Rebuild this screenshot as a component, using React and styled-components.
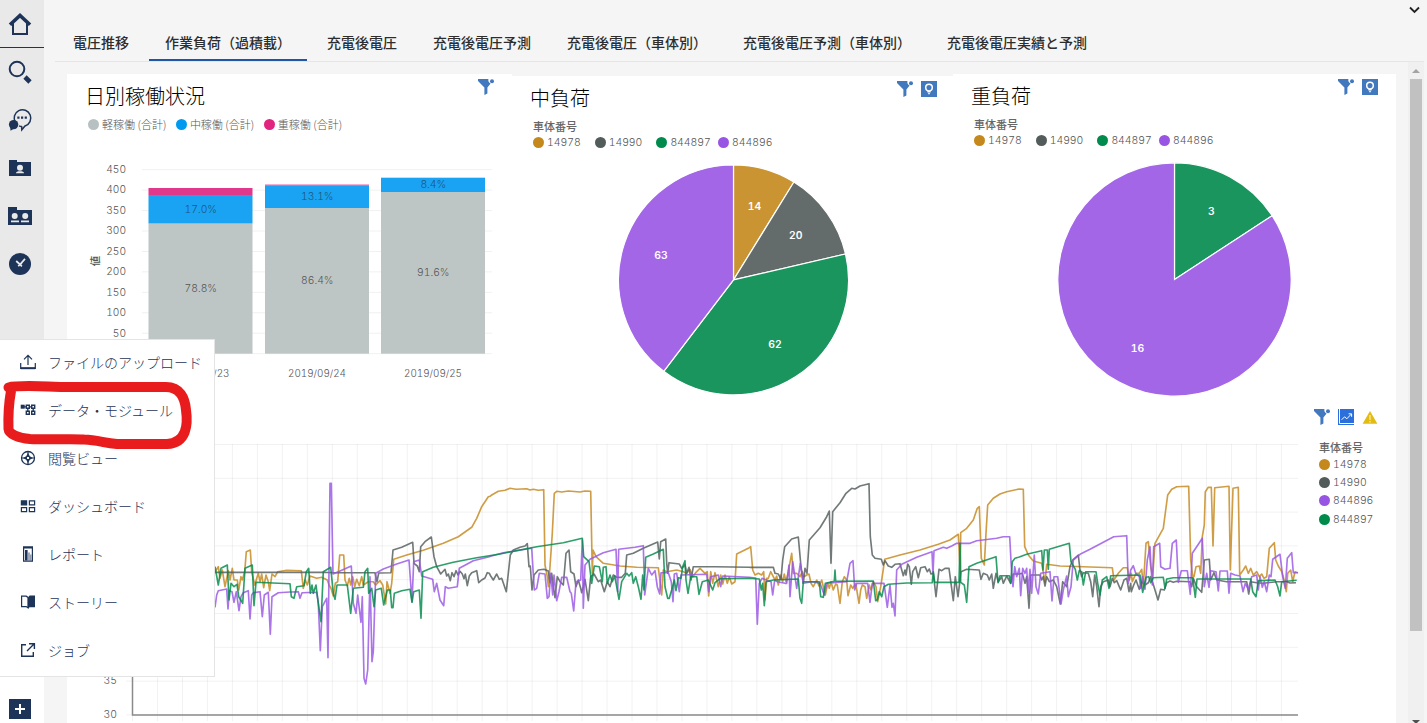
import React from 'react';
import styled, {createGlobalStyle, css} from 'styled-components';

const NAVY = '#1d3458';
const BLUE = '#4178be';
const FONT = '"Inter", "Noto Sans CJK JP", sans-serif';

const SERIES_COLORS = {
   14978: '#c4881c',
   14990: '#525c5b',
   844897: '#008a4b',
   844896: '#9855e4',
};

const GlobalStyle = createGlobalStyle`
   * { box-sizing: border-box; }
   body {
      margin: 0;
      overflow: hidden;
      font-family: "Noto Sans CJK JP", sans-serif;
   }
   svg { display: block; overflow: visible; }
`;

const Page = styled.div`
   position: relative;
   display: flex;
   width: 1427px;
   height: 723px;
   overflow: hidden;
   background: #f5f5f5;
`;

const Sidebar = styled.nav`
   display: flex;
   flex-direction: column;
   width: 44px;
   background: #e9e9e9;
`;

const SidebarItem = styled.div`
   display: flex;
   align-items: center;
   height: 48px;
   padding-left: 8px;
   ${props => props.$active && css`
      border-bottom: 1px solid ${NAVY};
   `}
`;

const SidebarFooter = styled.div`
   height: 46px;
   margin-top: auto;
   padding: 22px 0 0 9px;
   background: #ffffff;
`;

const Main = styled.main`
   display: flex;
   flex-direction: column;
   flex: 1;
   min-width: 0;
`;

const TopBar = styled.div`
   display: flex;
   flex-shrink: 0;
   justify-content: flex-end;
   height: 24px;
   padding: 6px 7px 0 0;
`;

const TabBar = styled.div`
   display: flex;
   flex-shrink: 0;
   gap: 4px;
   height: 38px;
   margin: 0 3px 0 11px;
   padding-left: 2px;
   border-bottom: 1px solid #e6e6e6;
`;

const Tab = styled.div`
   height: 37px;
   padding: 0 16px;
   font-size: 14px;
   font-weight: 500;
   line-height: 37px;
   white-space: nowrap;
   color: #2d2d2d;
   border-bottom: ${props => props.$active ? '2px solid #1f57a4' : 'none'};
`;

const Viewport = styled.div`
   display: flex;
   flex: 1;
   min-height: 0;
   padding: 0 3px 0 23px;
`;

const Board = styled.div`
   width: 1329px;
   margin-right: 12px;
   padding-top: 12px;
`;

const CardRow = styled.div`
   display: grid;
   grid-template-columns: 445px 441px 443px;
   height: 328px;
`;

const Card = styled.section`
   margin-top: ${props => props.$drop || 0}px;
   padding-top: 5px;
   background: #ffffff;
`;

const CardHeader = styled.div`
   display: flex;
   justify-content: space-between;
   align-items: flex-start;
   height: 29px;
   padding: 0 ${props => props.$right || 18}px 0 18px;
`;

const CardTitle = styled.h2`
   margin: 5px 0 0;
   font-size: 20px;
   font-weight: 300;
   line-height: 24px;
   color: #000000;
`;

const Tools = styled.div`
   display: flex;
   gap: 8px;
   height: 16px;
`;

const LegendTitle = styled.div`
   height: 16px;
   font-size: 11px;
   font-weight: 500;
   line-height: 16px;
   color: #666666;
`;

const Legend = styled.div`
   display: flex;
   flex-direction: ${props => props.$vertical ? 'column' : 'row'};
   gap: ${props => props.$gap || 0}px;
`;

const LegendItem = styled.div`
   display: flex;
   align-items: center;
   gap: 3px;
   width: ${props => props.$width || 'auto'};
   height: ${props => props.$height || 16}px;
   font-family: ${props => props.$width ? FONT : '"Noto Sans CJK JP", sans-serif'};
   font-size: ${props => props.$width ? 10.4 : 11}px;
   font-weight: 300;
   font-variant-numeric: tabular-nums;
   white-space: nowrap;
   color: #555555;
`;

const Dot = styled.i`
   width: 11px;
   height: 11px;
   border-radius: 50%;
   background: ${props => props.$color};
`;

const BarLegend = styled.div`
   height: 25px;
   padding: 8px 0 0 21px;
`;

const PieLegend = styled.div`
   height: 57px;
   padding: 8px 0 0 ${props => props.$left}px;
`;

const TrendCard = styled.section`
   display: flex;
   height: 321px;
   background: #ffffff;
`;

const TrendSide = styled.div`
   display: flex;
   flex-direction: column;
   padding-top: 7px;
   margin-left: 7px;
`;

const TrendLegend = styled.div`
   padding: 14px 0 0 5px;
`;

const ChartText = styled.text`
   font-family: ${FONT};
   font-size: ${props => props.$size || 10.7}px;
   font-weight: ${props => props.$weight || 300};
   font-variant-numeric: tabular-nums;
   fill: ${props => props.$color || '#555555'};
   text-anchor: ${props => props.$anchor || 'middle'};
`;

const Scrollbar = styled.div`
   display: flex;
   flex-direction: column;
   align-items: center;
   width: 16px;
   background: #f0f0f0;
`;

const ScrollThumb = styled.div`
   flex-shrink: 0;
   width: 12px;
   height: 552px;
   margin: 4px 0 89px;
   background: #c1c1c1;
`;

const ScrollArrow = styled.div`
   flex-shrink: 0;
   margin-top: ${props => props.$down ? 0 : 7}px;
   border: 4px solid transparent;
   border-top: ${props => props.$down ? '4px solid #505050' : 'none'};
   border-bottom: ${props => props.$down ? 'none' : '4px solid #a3a3a3'};
   margin-bottom: ${props => props.$down ? 0 : 2}px;
`;

const Menu = styled.div`
   position: absolute;
   left: -1px;
   top: 339px;
   width: 216px;
   height: 338px;
   background: #ffffff;
   border: 1px solid #e4e4e4;
`;

const MenuItem = styled.div`
   display: flex;
   align-items: center;
   gap: 12px;
   height: 47.9px;
   padding: 0 0 3px 20px;
   font-size: 14px;
   font-weight: 300;
   white-space: nowrap;
   color: ${NAVY};
`;

const Marker = styled.svg`
   position: absolute;
   left: 0;
   top: 375px;
`;

/* icons */

const HomeIcon = () => (
   <svg width="24" height="24" viewBox="0 0 24 24">
      <path d="M5 11V22h14V11" fill="none" stroke={NAVY} strokeWidth="2"/>
      <path d="M2 12.7 12 3.4l10 9.3" fill="none" stroke={NAVY} strokeWidth="3.6"/>
   </svg>
);

const SearchIcon = () => (
   <svg width="24" height="24" viewBox="0 0 24 24">
      <circle cx="9" cy="9" r="7.3" fill="none" stroke={NAVY} strokeWidth="2"/>
      <path d="m17 17 5 5" stroke={NAVY} strokeWidth="4.6"/>
   </svg>
);

const ChatIcon = () => (
   <svg width="24" height="24" viewBox="0 0 24 24">
      <circle cx="5.6" cy="16.6" r="4.7" fill={NAVY}/>
      <path d="m2.3 19 .2 3.8L7 20z" fill={NAVY}/>
      <path d="M7.4 14.4A8.3 8.3 0 1 1 17 18l-3.2 3.8-.2-3.2a8 8 0 0 1-2.6-.8"
            fill="none" stroke={NAVY} strokeWidth="1.5"/>
      <path d="M9.3 8.5h2.2v2.2H9.3zM13 8.5h2.2v2.2H13zM16.7 8.5h2.2v2.2h-2.2z" fill={NAVY}/>
   </svg>
);

const FolderIcon = () => (
   <svg width="24" height="24" viewBox="0 0 24 24">
      <path d="M1 4h8v2h14v14H1z" fill={NAVY}/>
      <circle cx="12" cy="11.7" r="3" fill="#e9e9e9"/>
      <path d="M8 17.2c0-1.3 1.5-1.9 4-1.9s4 .6 4 1.9z" fill="#e9e9e9"/>
   </svg>
);

const TeamFolderIcon = () => (
   <svg width="24" height="24" viewBox="0 0 24 24">
      <path d="M0 3h9v3h15v15H0z" fill={NAVY}/>
      <circle cx="6.7" cy="12" r="3" fill="#e9e9e9"/>
      <circle cx="17.2" cy="12" r="3" fill="#e9e9e9"/>
      <path d="M3 16.6h8v1.6H3zM13 16.6h8v1.6h-8z" fill="#e9e9e9"/>
   </svg>
);

const RecentIcon = () => (
   <svg width="24" height="24" viewBox="0 0 24 24">
      <circle cx="12" cy="12" r="11" fill={NAVY}/>
      <path d="m8.2 9 3.8 3.5 5-5.6M10.2 14.2l3.6-3M10.3 11l3.6 3.4" fill="none" stroke="#e9e9e9" strokeWidth="1.7"/>
   </svg>
);

const PlusIcon = () => (
   <svg width="22" height="20" viewBox="0 0 22 20">
      <path d="M0 0h22v20H0z" fill={NAVY}/>
      <path d="M11 5v10M6 10h10" stroke="#ffffff" strokeWidth="2"/>
   </svg>
);

const UploadIcon = () => (
   <svg width="16" height="16" viewBox="0 0 16 16" fill="none" stroke={NAVY} strokeWidth="1.2">
      <path d="M8 11V1.5M4 5.3l4-4 4 4M.7 9v5.3h14.6V9"/>
      <path d="M.7 14.2h14.6" strokeWidth="2"/>
   </svg>
);

const ModuleIcon = () => (
   <svg width="16" height="16" viewBox="0 0 16 16">
      <path d="M.7 2.7h4v4h-4z" fill={NAVY}/>
      <path d="M4 4.9h8M7.8 7v3M13.2 7v3" stroke={NAVY} strokeWidth="1.3"/>
      <path d="M6.3 3.3h3v3h-3zM11.7 3.3h3v3h-3zM6.3 9.2h3v3h-3zM11.7 9.2h3v3h-3z"
            fill="#ffffff" stroke={NAVY} strokeWidth="1.4"/>
   </svg>
);

const ExploreIcon = () => (
   <svg width="16" height="16" viewBox="0 0 16 16">
      <circle cx="8" cy="8" r="6.5" fill="none" stroke={NAVY} strokeWidth="1.3"/>
      <path d="M8 1.5v13M1.5 8h13" stroke={NAVY} strokeWidth="1.2"/>
      <path d="m8 3 1.8 3.2L13 8 9.8 9.8 8 13 6.2 9.8 3 8l3.2-1.8z" fill={NAVY}/>
      <path d="M7 7h2v2H7z" fill="#ffffff"/>
   </svg>
);

const DashboardIcon = () => (
   <svg width="16" height="16" viewBox="0 0 16 16" stroke={NAVY} strokeWidth="1.2">
      <path d="M1.4 2.9h5.2v4H1.4z" fill={NAVY}/>
      <path d="M9.4 2.9h5.2v4H9.4zM1.4 9.6h5.2v4H1.4zM9.4 9.6h5.2v4H9.4z" fill="none"/>
   </svg>
);

const ReportIcon = () => (
   <svg width="16" height="16" viewBox="0 0 16 16">
      <path d="M3.6 1.2h8.8v14H3.6z" fill="none" stroke={NAVY} strokeWidth="1.2"/>
      <path d="M3 .6h10v2H3zM5 4h2.6v10.5H5z" fill={NAVY}/>
      <path d="M8.3 6.6h1.4v8H8.3zM10.2 8.6h1.2v6h-1.2z" fill={NAVY} opacity=".6"/>
   </svg>
);

const StoryIcon = () => (
   <svg width="16" height="16" viewBox="0 0 16 16">
      <path d="M1.6 2.2h4.6L8 3.4v10.4l-1.8-1.2H1.6z" fill="none" stroke={NAVY} strokeWidth="1.2"/>
      <path d="M8 3.4 9.6 1.6H15v11.6H9.6L8 14.6z" fill={NAVY}/>
   </svg>
);

const JobIcon = () => (
   <svg width="16" height="16" viewBox="0 0 16 16" fill="none" stroke={NAVY} strokeWidth="1.4">
      <path d="M6 2.7H1.7v11.6h11.6V10M9 1.7h5.4V7M14 2 7 9"/>
   </svg>
);

const FilterIcon = () => (
   <svg width="16" height="16" viewBox="0 0 16 16" fill={BLUE}>
      <path d="M0 0h10.4c-.4 2 .4 3.8 2.2 4.6L9.4 8.4v6.1L6.4 16V8.4L0 2z"/>
      <circle cx="14" cy="2.2" r="2"/>
   </svg>
);

const InsightIcon = () => (
   <svg width="16" height="16" viewBox="0 0 16 16">
      <path d="M0 0h16v16H0z" fill={BLUE}/>
      <circle cx="8" cy="6.6" r="3.3" fill="none" stroke="#ffffff" strokeWidth="1.5"/>
      <path d="M6.4 10h3.2v1.6H6.4zM7.2 12h1.6v1.2H7.2z" fill="#ffffff"/>
   </svg>
);

const TrendIcon = () => (
   <svg width="16" height="16" viewBox="0 0 16 16">
      <path d="M0 0h16v16H0z" fill="#2a6fdb"/>
      <path d="M1.5 0v14.5H16" fill="none" stroke="#ffffff" strokeWidth="1"/>
      <path d="m3.6 10.8 3-3 2.2 2 4.4-4.6M10.6 4.8h3v3" fill="none" stroke="#ffffff" strokeWidth="1"/>
   </svg>
);

const WarningIcon = () => (
   <svg width="16" height="16" viewBox="0 0 16 16">
      <path d="m8 2 7.4 12.8H.6z" fill="#e3bc13"/>
      <path d="M8 6v5M8 12v1.4" stroke="#f6e7a4" strokeWidth="1.4"/>
   </svg>
);

/* bar chart: the svg starts at the left edge of the card, y is measured from its own top */

const BARS = [
   {x: 81.5, label: '2019/09/23', low: [90.5, '78.8%', 154], mid: [62, '17.0%', 75], high: 55},
   {x: 198, label: '2019/09/24', low: [75, '86.4%', 146], mid: [52.3, '13.1%', 62], high: 51.6},
   {x: 314, label: '2019/09/25', low: [59, '91.6%', 138], mid: [44.7, '8.4%', 50], high: 44.7},
];

const BarChart = () => {
   const base = 220.7;
   const ticks = [450, 400, 350, 300, 250, 200, 150, 100, 50, ''];
   return (
      <svg width="445" height="260" viewBox="0 0 445 260">
         {ticks.map((tick, i) => (
            <g key={tick}>
               <path d={`M75 ${36.7 + i * 20.44}H425`} stroke="#f1f1f1" strokeWidth="1"/>
               <ChartText x="59" y={40 + i * 20.44} $anchor="end" $size={10.2}>{tick}</ChartText>
            </g>
         ))}
         {BARS.map(bar => (
            <g key={bar.label}>
               <rect x={bar.x} y={bar.low[0]} width="104" height={base - bar.low[0]} fill="#bec6c5"/>
               <rect x={bar.x} y={bar.mid[0]} width="104" height={bar.low[0] - bar.mid[0]} fill="#1aa3f2"/>
               <rect x={bar.x} y={bar.high} width="104" height={bar.mid[0] - bar.high} fill="#e0398c"/>
               <ChartText x={bar.x + 52.3} y={bar.low[2] + 5} $size={10.3}>{bar.low[1]}</ChartText>
               <ChartText x={bar.x + 52.3} y={bar.mid[2] + 5} $size={10.3} $color="#1c5680">{bar.mid[1]}</ChartText>
               <ChartText x={bar.x + 52} y="244" $size={9.9}>{bar.label}</ChartText>
            </g>
         ))}
         <ChartText transform="translate(32 128) rotate(-90)" $weight={500} $size={10.5}>値</ChartText>
      </svg>
   );
};

const render_slices = (slices, radius) => {
   const total = slices.reduce((sum, slice) => sum + slice.value, 0);
   const point = (turn, r) => [Math.sin(turn * 2 * Math.PI) * r, -Math.cos(turn * 2 * Math.PI) * r];
   let start = 0;
   return slices.map(slice => {
      const end = start + slice.value / total;
      const [x1, y1] = point(start, radius);
      const [x2, y2] = point(end, radius);
      const [tx, ty] = point((start + end) / 2, radius * 0.666);
      const large = end - start > 0.5 ? 1 : 0;
      start = end;
      return (
         <g key={slice.name}>
            <path
               d={`M0 0L${x1} ${y1}A${radius} ${radius} 0 ${large} 1 ${x2} ${y2}Z`}
               fill={SERIES_COLORS[slice.name]}
               fillOpacity="0.9"
               stroke="#ffffff"
               strokeWidth="1.2"/>
            <ChartText x={tx} y={ty + 4} $weight={600} $size={10.4} $color="#ffffff">{slice.value}</ChartText>
         </g>
      );
   });
};

const PieChart = ({cx, cy, radius, slices}) => (
   <svg width="441" height="235" viewBox="0 0 441 235">
      <g transform={`translate(${cx} ${cy})`}>{render_slices(slices, radius)}</g>
   </svg>
);

const MEDIUM_LOAD = [
   {name: '14978', value: 14},
   {name: '14990', value: 20},
   {name: '844897', value: 62},
   {name: '844896', value: 63},
];

const HEAVY_LOAD = [
   {name: '844897', value: 3},
   {name: '844896', value: 16},
];

/* voltage samples, four consecutive windows per vehicle, three units to the pixel */

const WINDOWS = [
   {dx: 0, dy: 0, from: 0},
   {dx: 780, dy: 0, from: 60},
   {dx: 1590, dy: 0, from: 30},
   {dx: 2400, dy: -120, from: 30},
];

const SAMPLES = {
   14990: [
      '15,397 340,397 370,398 495,398 501,425 506,399 543,398 549,330 575,322 608,307 612,370 622,378 628,395 632,320 645,305 664,291 672,350 680,380 692,402 705,388 710,408 715,402 721,422 726,398 732,410 738,392 744,405 750,394 757,402 762,416 766,402 772,437 778,408 785,398 800,392 806,428 815,420 825,414 832,398 838,400',
      '62,408 70,420 80,402 88,418 95,415 109,455 121,345 130,330 150,322 165,318 172,311 177,380 181,378 186,450 192,405 205,390 222,388 235,393 240,428 245,400 250,440 255,473 262,410 270,425 280,435 288,340 297,330 302,395 312,402 318,440 325,420 332,445 335,458 340,440 345,418 355,482 362,410 372,402 385,425 392,420 403,455 412,425 420,440 430,405 440,412 455,412 466,400 470,345 490,340 520,325 563,306 568,357 572,305 587,297 590,370 593,400 597,368 628,372 635,385 645,375 650,400 657,382 663,420 670,380 735,380 838,382',
      '30,382 100,382 105,400 115,402 123,418 128,360 134,320 155,297 175,291 183,380 190,430 195,385 201,400 208,300 240,263 260,230 268,213 273,370 278,215 300,188 318,160 335,145 345,147 360,138 387,131 391,290 397,345 405,355 424,358 430,375 435,362 445,378 455,382 465,373 480,371 490,407 495,390 498,405 503,372 508,380 514,433 518,395 527,380 535,413 542,383 555,380 562,395 568,387 573,402 580,400 588,470 597,388 605,392 615,385 627,385 633,430 640,482 646,410 654,470 663,395 680,388 718,390 723,418 730,400 742,405 748,420 755,402 760,445 768,400 775,425 785,410 790,430 800,408 812,430 820,402 838,402',
      '37,520 45,550 50,530 57,625 62,525 90,525 95,540 100,530 105,558 110,530 118,545 130,540 140,560 151,612 158,545 170,560 180,500 188,480 205,465 210,510 215,530 220,518 235,520 242,545 248,590 254,525 260,560 267,620 272,560 280,545 295,540 300,560 307,535 313,548 320,542 332,570 342,540 350,535 357,575 362,550 364,575 371,555 378,540 388,568 395,545 405,555 415,548 422,530 432,560 444,600 452,568 463,570 470,548 480,543 490,547 500,544 540,545 545,560 550,535 560,560 575,577 583,480 598,478 602,540 612,518 620,540 650,545 710,545 716,582 722,545 740,548 760,550 800,545 830,545 840,549 858,548',
   ],
   14978: [
      '15,395 25,380 30,415 37,390 45,440 55,392 60,420 67,385 72,420 82,420 86,450 93,410 97,420 104,395 109,335 121,330 125,395 134,435 145,400 150,425 155,402 161,443 168,405 175,425 179,452 186,402 195,410 203,395 230,391 274,392 280,445 286,420 292,435 300,408 320,415 335,412 352,420 357,435 363,445 370,468 376,430 383,425 389,345 401,345 405,420 412,437 418,415 422,435 428,410 434,440 440,418 448,437 455,410 460,435 475,425 490,425 497,435 510,422 518,435 527,492 531,425 540,460 545,430 551,358 590,345 640,331 700,310 745,290 785,262 800,235 815,200 835,170',
      '60,169 65,165 85,154 105,151 120,145 138,148 170,146 180,150 190,148 205,151 221,149 225,375 232,410 235,440 240,380 247,280 253,160 260,154 275,156 295,153 330,156 345,153 362,154 367,400 369,330 378,350 400,370 450,378 500,382 565,383 575,465 580,390 590,395 620,390 640,395 650,400 660,388 668,410 677,398 690,385 705,400 712,395 716,468 722,395 728,430 735,398 745,440 752,405 758,432 765,405 772,430 778,410 785,432 795,425 800,342 838,323',
      '32,320 38,390 45,405 55,400 65,405 71,395 75,480 80,415 85,415 92,395 105,420 110,408 115,435 122,405 128,425 133,402 138,425 145,395 155,340 160,400 170,400 180,410 187,395 192,410 200,405 207,402 213,430 220,440 230,420 237,438 245,420 250,440 256,465 263,430 268,445 273,425 280,450 287,432 292,435 300,490 307,425 313,410 320,420 324,467 332,435 338,445 347,430 357,490 362,450 367,435 375,440 380,475 388,435 393,450 400,425 408,440 413,485 422,440 428,400 434,358 480,345 540,330 595,313 630,300 655,283 661,400 662,278 680,265 700,240 712,205 718,200 724,355 733,375 738,280 743,195 760,175 780,162 800,155 838,147',
      '40,268 44,440 55,465 70,483 95,490 105,548 110,493 150,498 220,500 307,503 312,540 325,520 340,503 352,503 358,540 364,520 367,545 378,520 388,520 395,508 400,560 408,430 415,425 422,500 428,530 435,430 460,385 467,330 473,285 485,268 500,260 536,259 542,480 548,530 552,530 558,500 568,498 572,520 577,410 583,375 586,275 595,262 604,262 609,438 614,263 657,259 661,510 669,265 685,262 689,525 700,510 707,498 715,520 722,505 730,525 740,515 748,530 755,522 762,535 770,530 778,445 793,428 797,480 805,498 815,515 820,530 829,575 833,520 842,510 848,545 855,515 864,518',
   ],
   844896: [
      '15,502 20,465 25,452 50,447 54,507 58,452 66,455 72,487 79,455 87,512 93,470 100,458 115,452 120,537 125,465 130,458 150,455 157,530 163,465 175,457 181,583 186,470 205,458 240,456 265,455 270,475 276,458 320,457 325,490 331,632 337,500 350,475 354,653 360,130 364,130 369,402 390,393 424,378 430,490 438,520 443,465 453,547 457,470 462,715 467,732 473,690 480,410 486,665 490,635 497,400 520,387 560,372 597,360 606,485 611,365 628,360 635,408 668,418 673,455 680,430 690,480 701,497 706,440 715,445 742,440 748,385 790,362 838,350',
      '62,349 100,338 185,325 193,450 200,445 208,400 225,402 232,475 237,470 242,400 248,465 252,405 260,482 267,455 275,412 290,412 300,455 304,460 311,513 318,425 332,420 337,300 340,505 345,375 360,358 400,338 438,328 443,455 446,328 495,322 520,317 524,465 535,385 545,405 555,392 562,440 569,462 573,398 595,398 604,425 609,485 613,402 620,400 628,455 633,405 710,403 716,455 722,410 745,405 752,440 758,408 838,412',
      '47,414 52,553 58,430 66,415 93,425 98,465 104,420 112,425 135,430 140,430 147,375 150,470 158,365 170,445 181,370 190,430 215,425 240,430 253,465 260,430 320,425 330,370 339,362 344,450 350,430 383,430 390,487 397,430 418,430 432,430 442,502 450,435 456,502 460,490 465,528 470,390 485,373 530,352 576,335 579,400 582,332 610,322 620,325 635,318 650,310 690,310 710,302 770,295 790,290 809,290 814,380 819,440 824,380 830,410 838,385',
      '32,587 38,505 45,520 50,505 54,577 60,508 65,580 73,465 78,560 85,582 92,520 120,515 126,603 132,530 143,530 153,612 160,570 170,528 175,590 183,560 190,480 210,463 240,448 270,432 311,410 350,407 355,550 362,510 370,497 377,520 388,530 392,565 398,530 405,568 412,480 420,440 423,500 427,555 431,440 449,430 452,500 465,508 480,505 487,430 499,420 505,547 514,512 532,512 541,583 547,460 560,440 577,415 583,560 590,520 597,562 602,512 618,515 625,573 630,513 652,513 657,580 662,520 675,525 690,528 699,575 706,550 715,568 725,530 740,525 745,570 750,530 757,562 763,545 770,575 778,525 783,530 788,478 810,463 818,530 826,565 832,475 845,458 850,518 864,518',
   ],
   844897: [
      '15,380 25,435 33,385 52,375 57,480 63,430 72,440 81,433 86,470 98,490 105,385 127,375 132,497 138,427 240,431 244,470 252,475 260,440 282,437 289,395 296,385 301,460 306,435 310,460 318,435 325,490 333,545 340,395 362,382 370,460 375,478 381,435 412,435 422,520 430,445 460,442 465,395 473,385 476,460 485,445 492,500 497,450 514,445 521,495 532,450 541,450 545,503 549,503 553,460 575,452 600,448 606,487 611,455 628,450 633,535 638,395 670,382 730,367 800,353 838,347',
      '90,342 200,320 280,308 337,295 341,350 357,365 365,430 373,378 388,380 397,425 400,382 408,380 412,430 420,405 427,425 434,408 440,440 447,478 455,425 470,400 477,408 485,398 490,430 497,410 505,440 513,478 518,405 522,450 527,352 550,342 580,328 585,440 593,475 598,475 605,450 613,420 618,452 625,413 633,415 638,380 645,362 648,420 654,460 662,410 680,410 687,463 697,425 715,420 728,450 735,428 750,416 838,415',
      '58,417 64,450 68,430 73,497 78,425 100,420 175,417 180,475 185,490 190,425 238,425 242,470 250,472 256,430 283,424 285,390 287,424 400,423 407,482 412,480 418,455 425,470 432,440 445,433 500,429 577,428 580,395 584,427 657,427 660,310 662,427 673,435 680,487 687,380 710,370 768,350 774,428 780,407 808,407 812,430 817,365 825,355 838,351',
      '50,463 95,452 99,510 103,450 112,450 115,508 118,448 178,430 183,485 196,508 202,540 208,512 215,515 220,555 227,515 258,515 263,550 270,585 277,540 290,530 297,565 302,527 390,525 398,577 408,532 416,530 422,548 430,533 460,532 465,565 470,537 490,533 548,533 556,592 561,537 722,537 728,575 738,590 745,542 795,540 803,560 810,588 815,545 860,541',
   ],
};

const render_points = (windows) => {
   const points = [];
   windows.forEach((samples, i) => {
      const {dx, dy, from} = WINDOWS[i];
      samples.split(' ').forEach(sample => {
         const [x, y] = sample.split(',').map(Number);
         if (x >= from) {
            points.push(`${((x + dx) / 3).toFixed(1)},${((y + dy) / 3).toFixed(1)}`);
         }
      });
   });
   return points.join(' ');
};

const TrendChart = () => {
   const columns = Array.from({length: 47}, (_, i) => 65.5 + i * 24.976);
   // only the lowest ticks carry a label
   const rows = ['', '', '', '', '', '', '', 35, 30];
   return (
      <svg width="1240" height="321" viewBox="0 0 1240 321">
         {columns.map(x => (
            <path key={x} d={`M${x} 42V319`} stroke="#000000" strokeOpacity="0.055"/>
         ))}
         {rows.map((row, i) => (
            <g key={i}>
               <path d={`M59 ${42.5 + i * 33.8}H1231`} stroke="#000000" strokeOpacity="0.055"/>
               {row && <ChartText x="50" y={45.5 + i * 33.8} $anchor="end" $size={10.4}>{row}</ChartText>}
            </g>
         ))}
         <path d="M65.5 42V313H1231" fill="none" stroke="#8a8a8a" strokeWidth="1.5"/>
         <g transform="translate(143 38)" fill="none" strokeWidth="1.65" strokeOpacity="0.82" strokeLinejoin="round">
            {[14978, 14990, 844896, 844897].map(name => (
               <polyline key={name} points={render_points(SAMPLES[name])} stroke={SERIES_COLORS[name]}/>
            ))}
         </g>
      </svg>
   );
};

const TABS = [
   '電圧推移',
   '作業負荷（過積載）',
   '充電後電圧',
   '充電後電圧予測',
   '充電後電圧（車体別）',
   '充電後電圧予測（車体別）',
   '充電後電圧実績と予測',
];

const MENU_ITEMS = [
   {icon: <UploadIcon/>, label: 'ファイルのアップロード'},
   {icon: <ModuleIcon/>, label: 'データ・モジュール'},
   {icon: <ExploreIcon/>, label: '閲覧ビュー'},
   {icon: <DashboardIcon/>, label: 'ダッシュボード'},
   {icon: <ReportIcon/>, label: 'レポート'},
   {icon: <StoryIcon/>, label: 'ストーリー'},
   {icon: <JobIcon/>, label: 'ジョブ'},
];

const VehicleLegend = ({names, vertical}) => (
   <>
      <LegendTitle>車体番号</LegendTitle>
      <Legend $vertical={vertical}>
         {names.map(name => (
            <LegendItem key={name} $width="61.7px" $height={vertical ? 18.4 : 16}>
               <Dot $color={SERIES_COLORS[name]}/>{name}
            </LegendItem>
         ))}
      </Legend>
   </>
);

const App = () => (
   <Page>
      <GlobalStyle/>
      <Sidebar>
         <SidebarItem $active><HomeIcon/></SidebarItem>
         <SidebarItem><SearchIcon/></SidebarItem>
         <SidebarItem><ChatIcon/></SidebarItem>
         <SidebarItem><FolderIcon/></SidebarItem>
         <SidebarItem><TeamFolderIcon/></SidebarItem>
         <SidebarItem><RecentIcon/></SidebarItem>
         <SidebarFooter><PlusIcon/></SidebarFooter>
      </Sidebar>
      <Main>
         <TopBar>
            <svg width="11" height="8" viewBox="0 0 11 8">
               <path d="m1 1.5 4.5 4.5L10 1.5" fill="none" stroke="#222222" strokeWidth="1.8"/>
            </svg>
         </TopBar>
         <TabBar>
            {TABS.map((tab, i) => <Tab key={tab} $active={i === 1}>{tab}</Tab>)}
         </TabBar>
         <Viewport>
            <Board>
               <CardRow>
                  <Card>
                     <CardHeader>
                        <CardTitle>日別稼働状況</CardTitle>
                        <Tools><FilterIcon/></Tools>
                     </CardHeader>
                     <BarLegend>
                        <Legend $gap={9.5}>
                           <LegendItem><Dot $color="#b8c1c1"/>軽稼働 (合計)</LegendItem>
                           <LegendItem><Dot $color="#009bef"/>中稼働 (合計)</LegendItem>
                           <LegendItem><Dot $color="#e0247f"/>重稼働 (合計)</LegendItem>
                        </Legend>
                     </BarLegend>
                     <BarChart/>
                  </Card>
                  <Card $drop={2}>
                     <CardHeader $right={16}>
                        <CardTitle>中負荷</CardTitle>
                        <Tools><FilterIcon/><InsightIcon/></Tools>
                     </CardHeader>
                     <PieLegend $left={21}>
                        <VehicleLegend names={['14978', '14990', '844897', '844896']}/>
                     </PieLegend>
                     <PieChart cx={221.5} cy={112.9} radius={115} slices={MEDIUM_LOAD}/>
                  </Card>
                  <Card>
                     <CardHeader>
                        <CardTitle>重負荷</CardTitle>
                        <Tools><FilterIcon/><InsightIcon/></Tools>
                     </CardHeader>
                     <PieLegend $left={21}>
                        <VehicleLegend names={['14978', '14990', '844897', '844896']}/>
                     </PieLegend>
                     <PieChart cx={221.5} cy={114.5} radius={116.7} slices={HEAVY_LOAD}/>
                  </Card>
               </CardRow>
               <TrendCard>
                  <TrendChart/>
                  <TrendSide>
                     <Tools><FilterIcon/><TrendIcon/><WarningIcon/></Tools>
                     <TrendLegend>
                        <VehicleLegend vertical names={['14978', '14990', '844896', '844897']}/>
                     </TrendLegend>
                  </TrendSide>
               </TrendCard>
            </Board>
            <Scrollbar>
               <ScrollArrow/>
               <ScrollThumb/>
               <ScrollArrow $down/>
            </Scrollbar>
         </Viewport>
      </Main>
      <Menu>
         {MENU_ITEMS.map(item => (
            <MenuItem key={item.label}>{item.icon}{item.label}</MenuItem>
         ))}
      </Menu>
      <Marker width="200" height="80" viewBox="0 375 200 80">
         <path
            d="M8.5 387.500C16 385.500 34 386 48 386.500C60 387 66 387 74 387H166C180 387 185 398 186 410C188 424 187 443 167 444H117C104 443 98 440 84 439.500C72 438.500 48 440 30 439C18 438 9 434 8.500 429C8 414 9 402 11 391"
            fill="none" stroke="#e81c1c" strokeWidth="10" strokeLinecap="round" strokeLinejoin="round"/>
      </Marker>
   </Page>
);

export default App;
